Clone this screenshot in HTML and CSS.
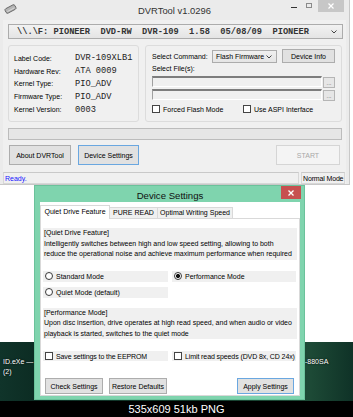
FILE: index.html
```html
<!DOCTYPE html>
<html>

<head>
    <title>DVRTool v1.0296</title>
    <link rel="stylesheet" href="styles.css">
</head>

<body>
    <div id="desktop">
        <div class="blank"></div>
        <div class="wallpaper">
            <span class="deskText deskLeft">ID.eXe &#8212;<br>(2)</span>
            <span class="deskText deskRight">-880SA</span>
        </div>

        <!-- main window -->
        <div id="mainWin" class="window">
            <div class="titlebar">
                <svg class="appIcon" width="13" height="10" viewBox="0 0 13 10">
                    <g transform="rotate(-28 6.5 5)">
                        <rect x="1" y="2.5" width="11" height="5" rx="1.5" fill="#b4b4b4" stroke="#5a5a5a" stroke-width="0.8" />
                        <line x1="2.5" y1="5.8" x2="10.5" y2="5.8" stroke="#e8e8e8" stroke-width="0.6" />
                    </g>
                </svg>
                <span class="title">DVRTool v1.0296</span>
                <div class="winControls">
                    <span class="minBtn"></span>
                    <span class="maxBtn"></span>
                    <span class="closeBtn">
                        <svg width="6" height="6" viewBox="0 0 6 6"><path d="M0.5 0.5 L5.5 5.5 M5.5 0.5 L0.5 5.5" stroke="#fff" stroke-width="1.2" /></svg>
                    </span>
                </div>
            </div>
            <div class="client">
                <div class="content">
                    <div class="driveCombo">
                        <span class="driveText">\\.\F: PIONEER  DVD-RW  DVR-109  1.58  05/08/09  PIONEER</span>
                        <svg class="chevron" width="6" height="4" viewBox="0 0 6 4"><path d="M0.5 0.5 L3 3 L5.5 0.5" fill="none" stroke="#444" stroke-width="1" /></svg>
                    </div>
                    <div class="groups">
                        <div class="group info">
                            <div class="infoRow"><span class="lbl">Label Code:</span><span class="val">DVR-109XLB1</span></div>
                            <div class="infoRow"><span class="lbl">Hardware Rev:</span><span class="val">ATA 0009</span></div>
                            <div class="infoRow"><span class="lbl">Kernel Type:</span><span class="val">PIO_ADV</span></div>
                            <div class="infoRow"><span class="lbl">Firmware Type:</span><span class="val">PIO_ADV</span></div>
                            <div class="infoRow"><span class="lbl">Kernel Version:</span><span class="val">0003</span></div>
                        </div>
                        <div class="group command">
                            <div class="cmdRow">
                                <span class="cmdLabel">Select Command:</span>
                                <div class="select">Flash Firmware
                                    <svg class="chevron" width="6" height="4" viewBox="0 0 6 4"><path d="M0.5 0.5 L3 3 L5.5 0.5" fill="none" stroke="#444" stroke-width="1" /></svg>
                                </div>
                                <button class="btn infoBtn">Device Info</button>
                            </div>
                            <div class="filesLabel">Select File(s):</div>
                            <div class="fileRow"><div class="field"></div><button class="dots">...</button></div>
                            <div class="fileRow"><div class="field"></div><button class="dots">...</button></div>
                            <div class="checkRow">
                                <label class="chkItem forced"><span class="check"></span>Forced Flash Mode</label>
                                <label class="chkItem"><span class="check"></span>Use ASPI Interface</label>
                            </div>
                        </div>
                    </div>
                    <div class="progress"></div>
                    <div class="actions">
                        <button class="btn about">About DVRTool</button>
                        <button class="btn focus settings">Device Settings</button>
                        <button class="btn start" disabled>START</button>
                    </div>
                </div>
                <div class="statusbar">
                    <span class="panel ready">Ready.</span>
                    <span class="panel mode">Normal Mode</span>
                </div>
            </div>
        </div>

        <!-- device settings dialog -->
        <div id="dlg" class="window">
            <div class="dlgTitle">
                <span class="dlgCaption">Device Settings</span>
                <span class="dlgClose">
                    <svg width="6" height="6" viewBox="0 0 6 6"><path d="M0.5 0.5 L5.5 5.5 M5.5 0.5 L0.5 5.5" stroke="#fff" stroke-width="1.3" /></svg>
                </span>
            </div>
            <div class="dlgClient">
                <div class="tabs">
                    <span class="tab active">Quiet Drive Feature</span>
                    <span class="tab pure">PURE READ</span>
                    <span class="tab optimal">Optimal Writing Speed</span>
                </div>
                <div class="tabPanel">
                    <div class="band first">[Quiet Drive Feature]<br>Intelligently switches between high and low speed setting, allowing to both<br>reduce the operational noise and achieve maximum performance when required</div>
                    <div class="optRow radios">
                        <label class="opt"><span class="radio"></span>Standard Mode</label>
                        <label class="opt"><span class="radio on"></span>Performance Mode</label>
                    </div>
                    <div class="optRow second">
                        <label class="opt"><span class="radio"></span>Quiet Mode (default)</label>
                        <span></span>
                    </div>
                    <div class="band perf">[Performance Mode]<br>Upon disc insertion, drive operates at high read speed, and when audio or video<br>playback is started, switches to the quiet mode</div>
                    <div class="optRow checks">
                        <label class="opt"><span class="check"></span>Save settings to the EEPROM</label>
                        <label class="opt"><span class="check"></span>Limit read speeds (DVD 8x, CD 24x)</label>
                    </div>
                    <div class="dlgButtons">
                        <button class="btn checkBtn">Check Settings</button>
                        <button class="btn restore">Restore Defaults</button>
                        <button class="btn focus apply">Apply Settings</button>
                    </div>
                </div>
            </div>
        </div>
    </div>
    <div class="caption">535x609 51kb PNG</div>
</body>

</html>
```

FILE: styles.css
```css
* {
    box-sizing: border-box;
}

body {
    margin: 0;
    background: #fff;
    font-family: "Liberation Sans", Arial, sans-serif;
    font-size: 7px;
    color: #000;
}

#desktop {
    position: relative;
    width: 353px;
    height: 401px;
    display: flex;
    flex-direction: column;
    overflow: hidden;
}

.blank {
    height: 342px;
    background: #fff;
}

.wallpaper {
    position: relative;
    height: 59px;
    background: linear-gradient(90deg, #10342a 0%, #0c2c23 10%, #16402f 60%, #1d4a36 88%, #0f3227 100%);
}

.deskText {
    position: absolute;
    color: #fff;
    font-size: 7px;
    line-height: 10px;
    text-shadow: 0 0 2px #000;
}

.deskLeft {
    left: 3px;
    top: 15px;
}

.deskRight {
    left: 305px;
    top: 15px;
}

.caption {
    height: 16px;
    background: #000;
    color: #fff;
    font-size: 11px;
    line-height: 16px;
    text-align: center;
}

/* windows */
.window {
    position: absolute;
}

#mainWin {
    left: 0;
    top: 0;
    width: 350px;
    height: 185px;
    background: #ebebeb;
    border-right: 1px solid #c8c8c8;
    border-bottom: 1px solid #c8c8c8;
    padding: 0 3px;
    display: flex;
    flex-direction: column;
}

.titlebar {
    height: 20px;
    display: grid;
    grid-template-columns: 1fr auto 1fr;
    align-items: center;
}

.appIcon {
    margin-left: 1px;
    margin-top: -3px;
}

.title {
    font-size: 9.4px;
    color: #333;
    margin-top: 1px;
}

.winControls {
    justify-self: end;
    align-self: start;
    display: flex;
    align-items: flex-start;
    margin-right: 2px;
}

.minBtn {
    width: 6px;
    height: 1px;
    background: #333;
    margin-top: 7px;
}

.maxBtn {
    width: 6px;
    height: 5px;
    border: 1px solid #8a8a8a;
    margin: 3px 0 0 9px;
}

.closeBtn {
    width: 26px;
    height: 12px;
    background: #c7c7c7;
    margin-left: 6px;
    display: flex;
    align-items: center;
    justify-content: center;
}

.client {
    flex: 1;
    background: #f0f0f0;
    display: flex;
    flex-direction: column;
}

.content {
    padding: 4px 4px 0 5px;
}

.driveCombo {
    height: 15px;
    margin-right: -1px;
    border: 1px solid #acacac;
    background: linear-gradient(#f2f2f2, #e4e4e4);
    display: flex;
    align-items: center;
    justify-content: space-between;
    padding: 0 5px 0 8px;
}

.driveText {
    font-family: "Liberation Mono", "Courier New", monospace;
    font-size: 8.7px;
    font-weight: bold;
    color: #333;
    white-space: pre;
}

.groups {
    display: flex;
    margin-top: 6px;
    height: 77px;
}

.group {
    border: 1px solid #dcdcdc;
    border-radius: 3px;
}

.info {
    width: 131px;
    padding: 6px 0 0 5px;
}

.infoRow {
    height: 12.8px;
    display: flex;
    align-items: center;
}

.lbl {
    width: 61px;
}

.val {
    font-family: "Liberation Mono", "Courier New", monospace;
    font-size: 8.7px;
    color: #222;
}

.command {
    width: 197px;
    margin-left: 6px;
    padding: 3px 0 0 6px;
}

.cmdRow {
    height: 14px;
    display: flex;
    align-items: center;
}

.cmdLabel {
    width: 60px;
}

.select {
    width: 65px;
    height: 13px;
    margin-top: 1px;
    border: 1px solid #acacac;
    background: linear-gradient(#f0f0f0, #e5e5e5);
    display: flex;
    align-items: center;
    justify-content: space-between;
    padding: 0 4px 0 3px;
}

.btn {
    font-family: "Liberation Sans", Arial, sans-serif;
    font-size: 7px;
    color: #000;
    background: #e1e1e1;
    border: 1px solid #adadad;
    padding: 0;
    white-space: nowrap;
}

.btn.focus {
    border-color: #6aa7e0;
}

.infoBtn {
    width: 53px;
    height: 14px;
    margin-left: 5px;
}

.filesLabel {
    height: 12px;
    line-height: 12px;
}

.fileRow {
    display: flex;
    height: 12px;
    margin-top: 1px;
}

.field {
    width: 170px;
    height: 11px;
    background: #f0f0f0;
    border-top: 2px solid #7d7d7d;
    border-left: 1px solid #a0a0a0;
    border-right: 1px solid #fff;
    border-bottom: 1px solid #fff;
}

.dots {
    width: 12px;
    height: 11px;
    margin: 1px 0 0 1px;
    padding: 0;
    font-size: 6px;
    line-height: 6px;
    color: #555;
    background: #e6e6e6;
    border: 1px solid #b5b5b5;
}

.checkRow {
    display: flex;
    height: 12px;
    margin-top: 2px;
    align-items: center;
}

.chkItem {
    display: flex;
    align-items: center;
}

.forced {
    width: 91px;
}

.check {
    width: 8px;
    height: 8px;
    flex: none;
    border: 1px solid #444;
    background: #fff;
    margin-right: 3px;
}

.progress {
    margin-top: 6px;
    width: 334px;
    height: 12px;
    background: #e6e6e6;
    border: 1px solid #bcbcbc;
}

.actions {
    display: flex;
    margin-top: 5px;
    height: 20px;
}

.actions .btn {
    height: 20px;
}

.about {
    width: 62px;
    margin-left: 1px;
}

.settings {
    width: 61px;
    margin-left: 7px;
}

.start {
    width: 64px;
    margin-left: auto;
    margin-right: 2px;
    background: #f4f4f4;
    border-color: #d5d5d5;
    color: #a8a8a8;
}

.statusbar {
    margin-top: auto;
    height: 12px;
    display: flex;
}

.panel {
    height: 12px;
    line-height: 11px;
    border: 1px solid #d7d7d7;
    border-top-color: #c9c9c9;
    white-space: nowrap;
    overflow: hidden;
}

.ready {
    width: 296px;
    color: #1414ff;
    padding-left: 1px;
}

.mode {
    width: 44px;
    margin-left: 2px;
    padding-left: 1px;
    letter-spacing: -0.15px;
}

/* dialog */
#dlg {
    left: 34px;
    top: 185px;
    width: 271px;
    height: 215px;
    background: #7fd4ae;
    border: 1px solid #6bc29b;
    padding: 0 4px 3px 5px;
    display: flex;
    flex-direction: column;
}

.dlgTitle {
    height: 16px;
    display: grid;
    grid-template-columns: 1fr auto 1fr;
    align-items: center;
}

.dlgCaption {
    grid-column: 2;
    font-size: 9.6px;
    color: #111;
    margin-top: 3px;
}

.dlgClose {
    justify-self: end;
    align-self: start;
    width: 20px;
    height: 13px;
    margin-right: -1px;
    background: #c75050;
    display: flex;
    align-items: center;
    justify-content: center;
}

.dlgClient {
    flex: 1;
    background: #fff;
    padding-top: 3px;
    display: flex;
    flex-direction: column;
}

.tabs {
    height: 13px;
    display: flex;
    align-items: flex-end;
    position: relative;
    z-index: 1;
}

.tab {
    height: 11px;
    line-height: 10px;
    background: #f0f0f0;
    border: 1px solid #d9d9d9;
    border-bottom: none;
    text-align: center;
}

.tab.active {
    width: 70px;
    height: 14px;
    margin-bottom: -1px;
    line-height: 12px;
    background: #fff;
}

.pure {
    width: 48px;
    border-left: none;
}

.optimal {
    width: 75px;
    border-left: none;
}

.tabPanel {
    flex: 1;
    border: 1px solid #d9d9d9;
    padding: 0 2px;
}

.band {
    background: #f0f0f0;
    line-height: 10.5px;
    padding-left: 1px;
    white-space: nowrap;
}

.band.first {
    margin-top: 9px;
}

.band.perf {
    margin-top: 10px;
}

.optRow {
    display: grid;
    grid-template-columns: 125px 124px;
    column-gap: 4px;
    height: 11px;
}

.optRow.radios {
    margin-top: 11px;
}

.optRow.second {
    margin-top: 5px;
}

.optRow.checks {
    margin-top: 12px;
    height: 10px;
}

.opt {
    background: #f0f0f0;
    display: flex;
    align-items: center;
    padding-left: 2px;
    white-space: nowrap;
}

.checks .opt {
    letter-spacing: -0.1px;
}

.radio {
    width: 8px;
    height: 8px;
    flex: none;
    border: 1px solid #3a3a3a;
    border-radius: 50%;
    background: #fff;
    margin-right: 3px;
}

.radio.on {
    background: radial-gradient(circle, #111 0 1.8px, #fff 2.3px);
}

.dlgButtons {
    display: flex;
    margin-top: 17px;
    padding-left: 2px;
}

.dlgButtons .btn {
    height: 16px;
}

.checkBtn {
    width: 58px;
}

.restore {
    width: 58px;
    margin-left: 6px;
}

.apply {
    width: 57px;
    margin-left: auto;
    margin-right: 3px;
}
```
